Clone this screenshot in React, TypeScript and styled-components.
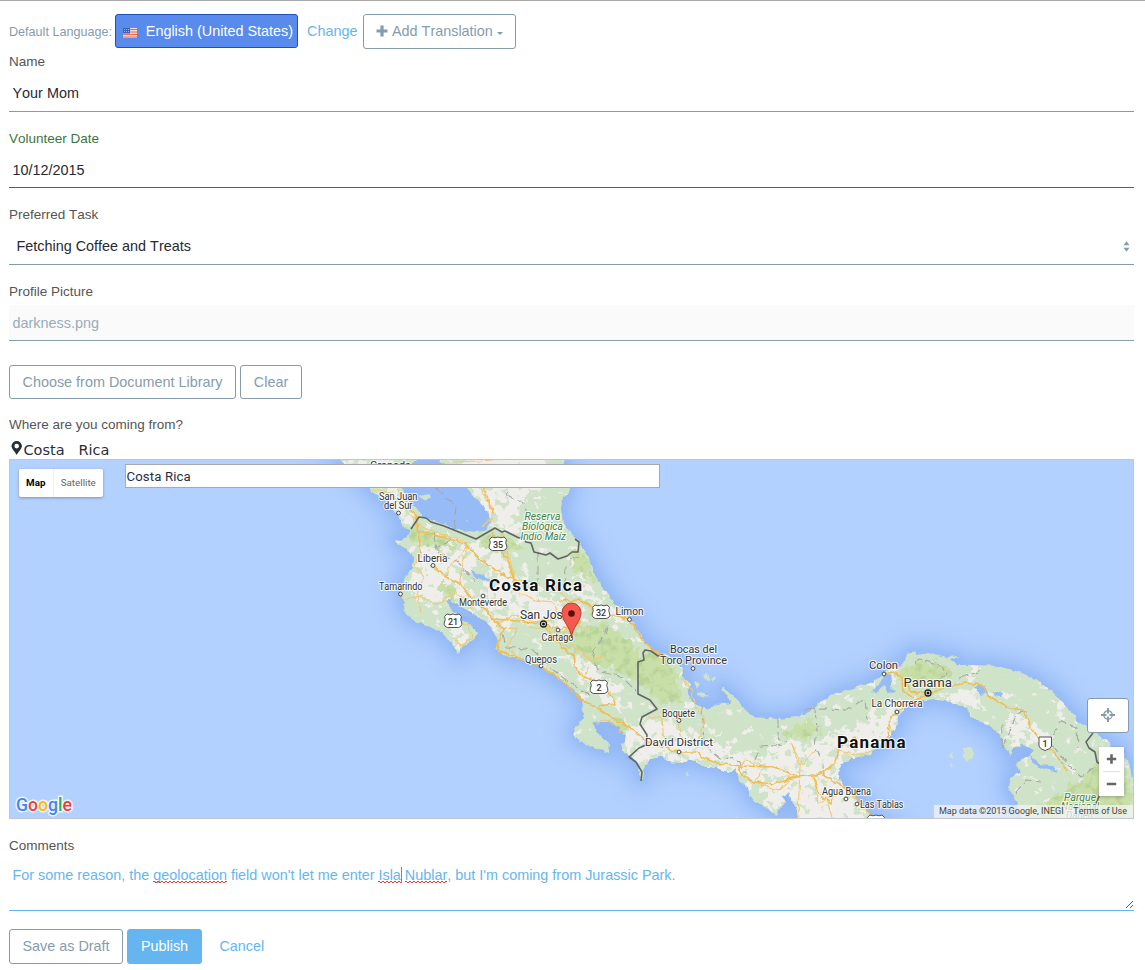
import React from 'react';
import styled, { createGlobalStyle, css } from 'styled-components';

const SANS = '"Liberation Sans", Arial, sans-serif';

const GlobalStyle = createGlobalStyle`
  body {
    margin: 0;
    background: #fff;
    font-family: ${SANS};
    font-kerning: none;
    overflow: hidden;
  }
  * { box-sizing: border-box; }
`;

const Page = styled.main`
  display: flex;
  flex-direction: column;
  height: 970px;
  padding: 13px 11px 0 9px;
  border-top: 1px solid #a9a9a9;
`;

const LanguageBar = styled.div`
  display: flex;
  align-items: flex-start;
  height: 36px;
  font-size: 14.4px;
  line-height: 34px;
`;

const LanguageCaption = styled.span`
  width: 106px;
  font-size: 12.6px;
  line-height: 36px;
  color: #869cad;
  white-space: nowrap;
`;

const LanguageBadge = styled.span`
  display: flex;
  align-items: center;
  width: 183px;
  height: 34px;
  padding-left: 7px;
  border: 1px solid #1d52b8;
  border-radius: 3px;
  background: #598bec;
  color: #fff;
  white-space: nowrap;
  svg { margin: 3px 8.8px 0 0; flex: none; }
`;

const LinkText = styled.a<{ $left: number }>`
  margin-left: ${p => p.$left}px;
  color: #65b6f0;
  white-space: nowrap;
`;

const Button = styled.button<{ $width: number; $height?: number; $primary?: boolean }>`
  display: flex;
  align-items: center;
  justify-content: center;
  flex: none;
  width: ${p => p.$width}px;
  height: ${p => p.$height ?? 34}px;
  padding: 0 0 ${p => (p.$height ? 1 : 0)}px;
  border: 1px solid #869cad;
  border-radius: 3px;
  background: #fff;
  color: #869cad;
  font: 14.4px ${SANS};
  font-kerning: none;
  white-space: nowrap;
  ${p => p.$primary && css`
    border-color: #65b6f0;
    background: #65b6f0;
    color: #fff;
  `}
`;

const TranslationButton = styled(Button)`
  margin-left: 6px;
  padding: 0 1px 1px 0;
  svg:first-child { margin: 0 4px 0 0; }
  svg:last-child { margin: 5px 0 0 4px; }
`;

const Field = styled.div<{ $height: number }>`
  height: ${p => p.$height}px;
  flex: none;
`;

const Label = styled.label<{ $valid?: boolean }>`
  display: block;
  height: 24px;
  font-size: 13.5px;
  line-height: 23px;
  color: ${p => (p.$valid ? '#3c763d' : '#555')};
`;

const Value = styled.div<{ $valid?: boolean; $disabled?: boolean; $select?: boolean }>`
  display: flex;
  align-items: flex-start;
  justify-content: space-between;
  height: ${p => (p.$valid ? 37 : 38)}px;
  padding: 11px 4.5px 0 ${p => (p.$select ? 7.5 : 3.5)}px;
  border-bottom: 1px solid ${p => (p.$valid ? '#3c763d' : '#869cad')};
  font-size: 14.4px;
  color: #272833;
  svg { margin-top: 3px; }
  ${p => p.$disabled && css`
    height: 36px;
    margin-top: 1px;
    padding-top: 10px;
    background: #fafafa;
    color: #98acba;
  `}
`;

const Actions = styled.div<{ $top: number }>`
  display: flex;
  gap: 4px;
  margin-top: ${p => p.$top}px;
  font-size: 14.4px;
  line-height: 34px;
`;

const Heading = styled(Label)`
  height: 23px;
`;

const Address = styled.div`
  display: flex;
  height: 23px;
  padding-left: 2px;
  font: 14.5px/28px "DejaVu Sans", sans-serif;
  color: #272f3a;
  white-space: pre;
  svg { margin: 5px 0.5px 0 0; }
`;

const MapFrame = styled.section`
  position: relative;
  flex: none;
  height: 360px;
  overflow: hidden;
  font-family: Roboto, sans-serif;
  > svg { display: block; }
`;

const MapTypes = styled.div`
  position: absolute;
  left: 10px;
  top: 10px;
  display: flex;
  height: 28px;
  background: #fff;
  border-radius: 2px;
  box-shadow: 0 1px 3px rgba(0, 0, 0, 0.3);
  font-size: 9.8px;
  line-height: 28px;
  text-align: center;
`;

const MapType = styled.span<{ $active?: boolean }>`
  width: ${p => (p.$active ? 33.5 : 50.5)}px;
  color: ${p => (p.$active ? '#000' : '#666')};
  font-weight: ${p => (p.$active ? 700 : 400)};
  border-left: ${p => (p.$active ? 0 : 1)}px solid #eee;
`;

const SearchBox = styled.div`
  position: absolute;
  left: 116px;
  top: 5px;
  width: 535px;
  height: 24px;
  padding-left: 0.5px;
  border: 1px solid #a9a9a9;
  background: #fff;
  color: #272f3a;
  font-size: 13.2px;
  line-height: 23px;
  letter-spacing: 0.12px;
`;

const LocateSlot = styled.div`
  position: absolute;
  right: 5px;
  bottom: 86px;
`;

const ZoomControl = styled.div`
  position: absolute;
  right: 10px;
  bottom: 23px;
  display: grid;
  place-items: center;
  width: 25px;
  height: 49px;
  background: #fff;
  box-shadow: 0 1px 3px rgba(0, 0, 0, 0.25);
`;

const Attribution = styled.div`
  position: absolute;
  right: 1px;
  bottom: 1px;
  display: flex;
  justify-content: space-between;
  width: 199px;
  height: 13px;
  padding: 0 6px 0 5px;
  background: rgba(245, 245, 245, 0.72);
  color: #444;
  font-size: 9px;
  line-height: 13px;
  white-space: nowrap;
`;

const Comments = styled.div`
  position: relative;
  height: 54px;
  padding: 10px 3.5px;
  border-bottom: 1px solid #65b6f0;
  font-size: 14.4px;
  line-height: 17px;
  color: #65b6f0;
  white-space: nowrap;
  > svg { position: absolute; right: 0; bottom: 1px; }
`;

const Misspelled = styled.span`
  position: relative;
  &::after {
    content: '';
    position: absolute;
    left: 0;
    right: 0;
    bottom: 0;
    height: 2px;
    background:
      linear-gradient(90deg, #e33 2px, transparent 2px) 0 0 / 4px 1px repeat-x,
      linear-gradient(90deg, #e33 2px, transparent 2px) 2px 1px / 4px 1px repeat-x;
  }
`;

const Caret = styled.span`
  display: inline-block;
  width: 1px;
  height: 16px;
  margin-right: -1px;
  vertical-align: -3px;
  background: #3d9be0;
`;

const LAND = `M330,450 L338,459 L348,466 L360,478 L370,488 L376,496 L385,499 L391,508 L397,513 L401,522 L403,528 L411,530
L408,536 L401,541 L395,540 L397,545 L407,549 L411,552 L414,560 L413,568 L404,577 L405,584 L400,589 L402,598 L405,612 L415,622
L430,627 L444,634 L451,643 L459,654 L462,647 L473,640 L478,633 L473,627 L466,622 L458,620 L457,614 L451,609 L448,602 L450,599
L461,607 L473,613 L480,619 L487,622 L492,630 L498,640 L496,648 L503,655 L515,658 L530,662 L541,667 L553,675 L563,682 L575,690
L581,698 L582,708 L585,717 L577,725 L573,735 L580,742 L597,748 L608,753 L609,743 L600,735 L594,728 L593,723 L600,722 L612,722
L620,729 L626,735 L625,742 L621,745 L623,752 L632,757 L637,763 L640,780 L643,780 L645,765 L650,759 L663,756 L670,762 L680,763
L692,760 L703,766 L717,768 L729,773 L736,768 L739,779 L747,787 L750,797 L757,802 L767,808 L777,817 L780,808 L786,802 L781,797
L788,793 L793,802 L797,811 L799,825 L888,825 L870,815 L860,803 L850,793 L842,784 L838,773 L841,764 L853,758 L870,755 L875,749
L888,740 L892,732 L898,725 L898,715 L905,708 L917,702 L933,699 L950,702 L967,708 L971,717 L983,723 L993,728 L1000,735
L1003,744 L1010,756 L1013,747 L1024,745 L1034,750 L1028,757 L1016,763 L1020,773 L1010,778 L1008,787 L1014,797 L1018,807
L1024,825 L1140,825 L1140,789 L1132,778 L1129,763 L1122,752 L1112,746 L1104,739 L1093,730 L1080,723 L1067,708 L1057,696
L1037,680 L1020,672 L997,666 L977,665 L957,665 L951,660 L960,656 L947,657 L930,653 L917,655 L915,651 L907,653 L905,661
L898,668 L889,669 L880,677 L870,683 L853,688 L837,693 L820,702 L810,711 L797,717 L777,719 L753,717 L743,707 L736,698
L729,693 L723,686 L722,690 L728,696 L732,703 L717,705 L709,709 L701,707 L693,702 L688,694 L690,683 L683,677 L683,668
L675,660 L668,655 L660,654 L650,647 L640,635 L630,618 L613,602 L597,578 L587,555 L580,542 L575,538 L568,530 L563,522
L561,508 L563,498 L569,493 L570,485 L566,470 L562,450Z`;

const LAKES = [
  'M397,482 L405,492 L409,503 L418,510 L424,518 L437,522 L455,529 L475,532 L486,531 L491,522 L487,510 L476,499 L467,488 L462,480 L435,458 L418,458Z',
  'M472,571 L480,574 L490,579 L489,582 L480,579 L473,576Z',
  'M886,672 L893,678 L890,686 L896,692 L889,694 L884,686 L876,693 L872,692 L880,683Z',
  'M974,687 L984,685 L988,693 L981,695Z M993,692 L1002,692 L1000,697 L995,696Z',
  'M450,596 L452,605 L461,607 L462,610 L474,615 L465,618 L456,611 L449,606Z',
  'M1030,755 L1040,764 L1052,765 L1058,772 L1044,769 L1034,765Z',
];

const ISLANDS = [
  'M418,496 L428,493 L431,497 L426,501Z',
  'M964,747 L973,747 L973,758 L966,762 L963,756Z',
  'M951,752 L954,751 L952,758 L949,757Z M950,763 L954,765 L951,767Z',
  'M702,675 L707,674 L709,680 L704,679Z M711,679 L717,676 L713,682Z M694,681 L699,684 L697,689Z M697,692 L710,696 L700,697Z',
  'M686,773 L689,774 L687,777Z M732,818 L738,816 L737,820Z',
  'M466,521 L469,520 L468,523Z',
];

const PALE = [
  'M378,494 L397,489 L409,511 L416,520 L405,525Z',
  'M462,455 L545,455 L553,485 L530,489 L520,507 L523,527 L508,533 L490,524 L487,507 L467,486Z',
  'M418,536 L440,543 L461,547 L470,565 L458,577 L478,596 L495,604 L520,618 L508,629 L490,617 L476,608 L451,596 L429,604 L410,592 L415,569 L420,558Z',
  'M445,532 L462,545 L480,560 L470,572 L450,560 L436,546Z',
  'M470,546 L484,539 L503,553 L514,575 L539,585 L545,602 L571,600 L586,610 L568,629 L546,626 L522,619 L494,602 L482,586 L486,567Z',
  'M566,588 L588,585 L611,610 L634,624 L614,622 L598,605Z',
  'M572,658 L591,665 L606,682 L619,686 L624,712 L606,702 L584,682Z',
  'M626,735 L647,718 L668,722 L710,744 L732,750 L748,770 L730,774 L700,764 L668,759 L644,760 L633,756 L622,747Z',
  'M720,753 L766,755 L773,742 L791,738 L810,747 L834,732 L858,738 L843,758 L832,776 L852,791 L870,825 L798,825 L791,793 L771,790 L750,778Z',
  'M840,732 L875,719 L902,697 L914,704 L895,718 L893,735 L864,755 L838,753Z',
  'M945,696 L965,686 L978,690 L979,708 L961,706Z',
  'M1003,720 L1022,711 L1032,724 L1048,734 L1050,748 L1028,739 L1010,744Z',
  'M1080,789 L1102,789 L1095,800 L1085,800Z',
  'M1100,739 L1121,750 L1131,769 L1110,760Z',
  'M452,624 L468,633 L463,646 L451,638Z',
  'M760,790 L780,789 L778,810 L768,804Z M783,791 L804,787 L817,817 L798,818Z',
  'M342,458 L392,458 L402,481 L373,485Z',
];

const HILLS = [
  'M414,525 L440,538 L464,546 L451,550 L420,546 L409,538Z',
  'M442,575 L450,590 L457,591 L452,602 L438,590Z',
  'M477,533 L500,535 L522,547 L507,554 L486,548Z',
  'M575,548 L587,559 L595,583 L583,575 L569,564Z',
  'M560,630 L604,624 L629,637 L635,653 L658,652 L674,669 L681,703 L663,702 L639,684 L620,672 L594,664 L567,649Z',
  'M781,735 L806,722 L825,728 L807,738Z',
  'M908,664 L940,661 L952,674 L937,689 L913,685 L900,675Z',
  'M1082,778 L1106,760 L1124,773 L1132,796 L1125,819 L1040,819 L1041,805 L1067,791Z',
  'M607,718 L622,718 L628,729 L616,730Z',
];

const MINOR_ROADS = [
  'M373,490 Q388,488 402,506 T430,530 L462,540',
  'M417,526 L421,551 L415,565 L424,579 L417,590 L421,612',
  'M433,567 L447,577 L449,567 L469,545 L463,562 L459,587',
  'M402,600 L419,596 L438,605 L455,592 L472,609',
  'M501,532 L508,554 L514,575 L515,590 L535,600 L553,602 L559,619',
  'M455,462 L480,461 L500,459 M480,490 L492,506 L492,517 L482,527',
  'M451,620 L469,625 L472,637 L462,646 L453,638',
  'M495,626 L513,615 L535,622 L570,618 L582,628',
  'M498,629 L518,628 L508,646 L515,656 M529,627 L549,628 L562,637 L571,619',
  'M555,588 L567,598 L565,615 M585,600 L592,612 L586,631',
  'M566,642 L579,651 L593,661 L604,655',
  'M589,666 L582,680 M648,717 L662,717 L664,744',
  'M679,721 L682,741 M682,677 L691,690 L697,710 L704,718 L697,747',
  'M791,743 L800,766 L798,817 M813,776 L818,804 L836,792',
  'M738,767 L746,760 L767,767 M792,744 L802,765 L815,750',
  'M762,769 L754,782 L779,790 L795,775',
  'M832,817 L827,801 M838,751 L862,755 L876,747',
  'M597,725 L603,719 L620,728 L620,733',
];

const MAJOR_ROADS = [
  'M397,490 L409,506 L418,520 L417,532 L451,539 L465,544 L480,560 L502,574 L512,579 L541,584',
  'M483,487 L494,515 M493,533 L501,550 L509,563 L514,581',
  'M418,532 L421,552 M433,565 L447,577 L461,584 L474,602 L487,611 L493,619 L508,620 L541,624 L562,629 L582,622',
  'M559,601 L580,600 L592,607 M608,614 L629,619 L640,637 L655,652 L671,660',
  'M492,619 L504,629 L497,646 L500,652 L517,657 L544,668 L563,681 L582,700 L603,712 L632,729 L648,742 L678,752 L697,752 L704,758 L716,763 L740,766 L774,767 L799,777 L820,774 L838,783 L855,797 L873,817',
  'M544,625 L554,638 L562,648 L574,655 L575,665 L582,676 L599,683 L614,698 L615,704 L597,706',
  'M820,774 L830,768 L837,758 L839,747 L856,737 M872,741 L888,738 L889,725 L890,718 L902,708 L915,700 L928,695 L943,688 L964,683 L982,685 L989,696 L1009,708 L1023,710 L1032,730 L1045,744 L1056,755 L1067,771',
  'M884,674 L895,673 L905,680 L911,692 L928,694 M902,680 L903,690 L914,698',
  'M739,767 L743,777 L754,782 L775,784 L800,776',
  'M813,777 L819,794 L831,804 L835,791',
];

const PROVINCES = [
  'M437,488 L447,498 L456,507 L454,529 M505,480 L508,496 L524,504 L529,520',
  'M433,532 L438,553 L458,562 L475,582 M451,540 L438,548',
  'M538,553 L538,585 M566,566 L565,586 M571,560 L580,556',
  'M503,634 L506,647 L533,650 L551,668 L566,680 L590,695',
  'M592,650 L596,669 L622,677 L636,691 M608,625 L602,640 L592,652',
  'M702,706 L704,745 L720,758 L736,759 L747,775',
  'M778,720 L778,738 L786,743 M815,710 L817,729 L815,747 L822,758 L824,775',
  'M755,760 L760,747 L785,745 M805,710 L824,709 L848,710 L865,699 L867,720',
  'M915,664 L918,659 L940,665 L948,674 L932,683 M960,678 L980,671',
  'M1003,724 L1002,749 L1016,714 L1030,710 M1052,735 L1061,721 L1077,728 L1078,748',
  'M1052,745 L1067,763 L1081,777 L1096,766 M1015,793 L1027,780 L1041,782',
];

type MapLabelData = [string, number, number, number, number, ('bold' | 'park')?];
const LABELS: MapLabelData[] = [
  ['Granada', 370, 469, 41, 11.2],
  ['San Juan', 379, 500, 38.5, 10],
  ['del Sur', 384, 509, 28.5, 10],
  ['Liberia', 417.5, 561.5, 30, 10.6],
  ['Tamarindo', 379, 590, 43.5, 10],
  ['Monteverde', 459, 606, 48, 10],
  ['Costa Rica', 489, 590.5, 93, 17, 'bold'],
  ['San José', 520, 619, 49, 12],
  ['Limon', 615.5, 615, 28, 10.8],
  ['Cartago', 541.5, 640.5, 32, 10],
  ['Quepos', 525, 662.5, 32, 10],
  ['Bocas del', 670, 653, 47, 11.5],
  ['Toro Province', 660, 664, 67, 11.5],
  ['Boquete', 662, 716.5, 33, 10],
  ['David District', 645, 746, 68, 11.5],
  ['Colon', 869, 668.5, 29, 11.5],
  ['Panama', 903.5, 687, 48.5, 13],
  ['La Chorrera', 871.5, 706.5, 51, 10.5],
  ['Panama', 837, 748, 68.5, 17, 'bold'],
  ['Agua Buena', 822, 795, 49, 10],
  ['Las Tablas', 860, 807.5, 43.5, 10],
  ['Reserva', 524.5, 520, 36, 10.5, 'park'],
  ['Biológica', 522, 530, 41, 10.5, 'park'],
  ['Indio Maíz', 520.5, 540, 45.5, 10.5, 'park'],
  ['Parque', 1064, 800.5, 32, 10.5, 'park'],
  ['Nacional', 1061, 810, 38, 10.5, 'park'],
  ['Darien', 1066, 819, 27, 10.5, 'park'],
];

const TOWNS = [
  [398.5, 513], [433, 565.5], [400.5, 594], [483, 596], [629.5, 619.5], [558, 630], [541, 666],
  [693, 668.5], [679, 720.5], [679, 752], [884, 674], [897, 712], [846, 799], [857, 804],
];
const CAPITALS = [[543.5, 624], [928, 693]];
const SHIELDS: [string, number, number][] = [['35', 498, 544], ['21', 453, 621], ['32', 601, 612], ['2', 599, 687], ['', 876, 822]];

const MapText = styled.text<{ $kind?: string }>`
  font-family: Roboto, sans-serif;
  font-weight: ${p => (p.$kind === 'bold' ? 700 : 400)};
  font-style: ${p => (p.$kind === 'park' ? 'italic' : 'normal')};
  fill: ${p => (p.$kind === 'park' ? '#3f8048' : p.$kind === 'bold' ? '#111' : '#333')};
  stroke: #fff;
  stroke-opacity: 0.8;
  stroke-width: 2.2px;
  stroke-linejoin: round;
  paint-order: stroke;
`;

const ShieldText = styled.text`
  font: 500 9px Roboto, sans-serif;
  fill: #333;
  text-anchor: middle;
`;

const LogoText = styled.text`
  font: 500 18.5px Roboto, sans-serif;
  stroke: rgba(255, 255, 255, 0.8);
  stroke-width: 3px;
  paint-order: stroke;
`;

function Terrain() {
  return (
    <svg width="1125" height="360" viewBox="9 459 1125 360">
      <defs>
        <filter id="coast" x="-10%" y="-10%" width="120%" height="120%"><feGaussianBlur stdDeviation="12" /></filter>
        <filter id="shore" x="-10%" y="-10%" width="120%" height="120%"><feGaussianBlur stdDeviation="5" /></filter>
        <filter id="rough" x="-5%" y="-5%" width="110%" height="110%">
          <feTurbulence type="fractalNoise" baseFrequency="0.12" numOctaves="3" seed="4" />
          <feDisplacementMap in="SourceGraphic" scale="20" xChannelSelector="R" yChannelSelector="G" />
        </filter>
        <filter id="coastline" x="-5%" y="-5%" width="110%" height="110%">
          <feTurbulence type="fractalNoise" baseFrequency="0.16" numOctaves="2" seed="8" />
          <feDisplacementMap in="SourceGraphic" scale="5" xChannelSelector="R" yChannelSelector="G" />
        </filter>
        <filter id="fleck" x="0" y="0" width="100%" height="100%">
          <feTurbulence type="fractalNoise" baseFrequency="0.1 0.12" numOctaves="3" seed="21" />
          <feColorMatrix values="0 0 0 0 0.62  0 0 0 0 0.77  0 0 0 0 0.57  14 0 0 0 -8.1" />
          <feComposite in2="SourceGraphic" operator="in" />
        </filter>
        <filter id="clearing" x="0" y="0" width="100%" height="100%" colorInterpolationFilters="sRGB">
          <feTurbulence type="fractalNoise" baseFrequency="0.09 0.11" numOctaves="3" seed="33" />
          <feColorMatrix values="0 0 0 0 0.94  0 0 0 0 0.93  0 0 0 0 0.92  14 0 0 0 -8.9" />
          <feComposite in2="SourceGraphic" operator="in" />
        </filter>
        <filter id="relief" x="0" y="0" width="100%" height="100%" colorInterpolationFilters="sRGB">
          <feTurbulence type="fractalNoise" baseFrequency="0.13" numOctaves="3" seed="12" result="n" />
          <feColorMatrix in="n" values="0 0 0 0 0.55  0 0 0 0 0.7  0 0 0 0 0.42  4 0 0 0 -1.9" />
          <feComposite in2="SourceGraphic" operator="in" />
        </filter>
        <clipPath id="landClip"><path d={LAND} /></clipPath>
      </defs>
      <rect x="9" y="459" width="1125" height="360" fill="#b3d1ff" />
      <path d={LAND} fill="#94b9f6" stroke="#94b9f6" strokeWidth="20" filter="url(#coast)" opacity="0.9" />
      <path d={LAND} fill="none" stroke="#86adf0" strokeWidth="6" filter="url(#shore)" opacity="0.5" />
      <g filter="url(#coastline)">
        <path d={LAND} fill="#cfe3c8" />
        <g clipPath="url(#landClip)">
          <path d={LAND} filter="url(#clearing)" />
          <g filter="url(#rough)" fill="#f0eeea">{PALE.map(d => <path key={d} d={d} />)}</g>
          <g filter="url(#fleck)">{PALE.map(d => <path key={d} d={d} />)}</g>
          <g filter="url(#rough)" fill="#c8dfa8">{HILLS.map(d => <path key={d} d={d} />)}</g>
          <g filter="url(#relief)" opacity="0.28">{HILLS.map(d => <path key={d} d={d} />)}</g>
        </g>
        <g fill="#96bbf7">{LAKES.map(d => <path key={d} d={d} />)}</g>
        <g fill="#cfe3c8">{ISLANDS.map(d => <path key={d} d={d} />)}</g>
      </g>
      <g filter="url(#coastline)" fill="none" strokeLinejoin="round">
        <g stroke="#a5a9a5" strokeWidth="1.1" strokeDasharray="9 4">{PROVINCES.map(d => <path key={d} d={d} />)}</g>
        <g stroke="#edca78" strokeWidth="1.1">{MINOR_ROADS.map(d => <path key={d} d={d} />)}</g>
        <g stroke="#efbd51" strokeWidth="1.6">{MAJOR_ROADS.map(d => <path key={d} d={d} />)}</g>
      </g>
      <g fill="none" stroke="#626662" strokeWidth="1.6" strokeLinejoin="round">
        <path d="M411,529 L419,517 L426,518 L431,522 L444,526 L476,539 L495,528 L502,532 L505,531 L519,538 L523,537 L526,542 L531,543 L534,552 L546,555 L550,553 L558,559 L567,556 L572,552 L578,552 L579,542 L575,539" />
        <path d="M669,659 L662,655 L658,656 L651,651 L645,650 L643,653 L644,660 L638,662 L638,694 L650,700 L657,709 L642,717 L640,724 L647,735 L646,745 L639,748 L629,757 L636,762 L642,772 L641,781" />
        <path d="M1093,733 L1086,742 L1089,748 L1095,752 L1097,762 L1106,768 M1100,794 L1095,806 L1090,817" />
      </g>
      <g fill="#fff" stroke="#444" strokeWidth="1">
        {TOWNS.map(([x, y]) => <circle key={`${x}-${y}`} cx={x} cy={y} r="1.9" />)}
      </g>
      {CAPITALS.map(([x, y]) => (
        <g key={x}><circle cx={x} cy={y} r="3" fill="#fff" stroke="#222" strokeWidth="1.3" /><circle cx={x} cy={y} r="1.5" fill="#111" /></g>
      ))}
      {SHIELDS.map(([n, x, y]) => (
        <g key={x}>
          <path d={`M${x - 6},${y - 7} q3,1.6 6,0 q3,1.6 6,0 l2.4,2.3 q-1.5,3.6 .4,6.7 q.4,3.6 -3.6,4.5 h-10.4 q-4,-.9 -3.6,-4.5 q1.9,-3.1 .4,-6.7z`} fill="#fff" stroke="#555" strokeWidth="1" />
          <ShieldText x={x} y={y + 3.5}>{n}</ShieldText>
        </g>
      ))}
      <path d="M1039,737 H1051.5 V746 Q1051,749 1045,750.5 Q1039.5,749 1039,746Z" fill="#fff" stroke="#555" />
      <ShieldText x={1045} y={747}>1</ShieldText>
      {LABELS.map(([t, x, y, w, size, kind]) => (
        <MapText key={`${t}${x}`} x={x} y={y} textLength={w} lengthAdjust={kind === 'bold' ? 'spacing' : 'spacingAndGlyphs'} fontSize={size} $kind={kind}>{t}</MapText>
      ))}
      <path d="M571.5,638 C571,627 562,622 562,612.5 A9.5,9.5 0 0 1 581,612.5 C581,622 572,627 571.5,638Z" fill="#f4584f" stroke="#b3312b" strokeWidth="0.9" />
      <circle cx="571.5" cy="613.5" r="3.3" fill="#5b0f0c" />
      <LogoText x="16" y="811" textLength="56" lengthAdjust="spacingAndGlyphs">
        <tspan fill="#4285f4">G</tspan><tspan fill="#ea4335">o</tspan><tspan fill="#fbbc05">o</tspan>
        <tspan fill="#4285f4">g</tspan><tspan fill="#34a853">l</tspan><tspan fill="#ea4335">e</tspan>
      </LogoText>
      <path d="M9.5,819 V459.5 H1133.5 V818.5 H9" fill="none" stroke="#c3c7cc" />
    </svg>
  );
}

const Flag = () => (
  <svg width="14" height="10" viewBox="0 0 14 10">
    <rect width="14" height="10" fill="#f6d9d5" />
    <path d="M0,1.5H14M0,4H14M0,6.5H14M0,9H14" stroke="#ea6a5a" strokeWidth="1.2" />
    <rect width="7" height="5.5" fill="#3765bd" />
    <path d="M1,1.5H7M1,3.5H7" stroke="#a9c1ec" strokeWidth=".8" strokeDasharray="1 1" />
  </svg>
);

export default function App() {
  return (
    <Page>
      <GlobalStyle />
      <LanguageBar>
        <LanguageCaption>Default Language:</LanguageCaption>
        <LanguageBadge><Flag />English (United States)</LanguageBadge>
        <LinkText $left={9}>Change</LinkText>
        <TranslationButton $width={153} $height={35}>
          <svg width="12" height="12" viewBox="0 0 12 12"><path d="M6,.5V11.5M.5,6H11.5" stroke="#869cad" strokeWidth="3.2" /></svg>
          Add Translation
          <svg width="6" height="3" viewBox="0 0 6 3"><path d="M0,0H6L3,3Z" fill="#869cad" /></svg>
        </TranslationButton>
      </LanguageBar>
      <Field $height={77}><Label>Name</Label><Value>Your Mom</Value></Field>
      <Field $height={76}><Label $valid>Volunteer Date</Label><Value $valid>10/12/2015</Value></Field>
      <Field $height={77}>
        <Label>Preferred Task</Label>
        <Value $select>
          Fetching Coffee and Treats
          <svg width="7" height="11" viewBox="0 0 7 11"><path d="M.5,4.3L3.5,.3L6.5,4.3ZM.5,6.7H6.5L3.5,10.7Z" fill="#869cad" /></svg>
        </Value>
      </Field>
      <Field $height={76}><Label>Profile Picture</Label><Value $disabled>darkness.png</Value></Field>
      <Actions $top={9}>
        <Button $width={227}>Choose from Document Library</Button>
        <Button $width={62}>Clear</Button>
      </Actions>
      <Actions $top={14}><Heading>Where are you coming from?</Heading></Actions>
      <Address>
        <svg width="12" height="14" viewBox="0 0 12 14"><path fillRule="evenodd" d="M5.7,0A5.2,5.2 0 0 1 10.9,5.1C10.9,8 7.2,11 5.7,14C4.2,11 .5,8 .5,5.1A5.2,5.2 0 0 1 5.7,0ZM5.7,2.8A2.3,2.3 0 1 0 5.7,7.4A2.3,2.3 0 1 0 5.7,2.8Z" fill="#272f3a" /></svg>
        {'Costa   Rica'}
      </Address>
      <MapFrame>
        <Terrain />
        <MapTypes><MapType $active>Map</MapType><MapType>Satellite</MapType></MapTypes>
        <SearchBox>Costa Rica</SearchBox>
        <LocateSlot>
          <Button $width={42} $height={35}>
            <svg width="15" height="15" viewBox="0.5 0.5 15 15" fill="none" stroke="#869cad">
              <circle cx="7.5" cy="7.5" r="4.2" strokeWidth="1.3" /><path d="M7.5,.5V6M7.5,9V14.5M.5,7.5H6M9,7.5H14.5" strokeWidth="2" />
            </svg>
          </Button>
        </LocateSlot>
        <ZoomControl>
          <svg width="25" height="49" viewBox="0 0 25 49" stroke="#666" strokeWidth="2.6">
            <path d="M12.5,7.3V16.7M7.8,12H17.2M7.8,37H17.2" /><path d="M4,24.5H21" stroke="#e3e3e3" strokeWidth="1" />
          </svg>
        </ZoomControl>
        <Attribution><span>Map data ©2015 Google, INEGI</span><span>Terms of Use</span></Attribution>
      </MapFrame>
      <Actions $top={15}><Heading>Comments</Heading></Actions>
      <Comments>
        For some reason, the <Misspelled>geolocation</Misspelled> field won't let me enter <Misspelled>Isla</Misspelled><Caret /> <Misspelled>Nublar</Misspelled>, but I'm coming from Jurassic Park.
        <svg width="9" height="9" viewBox="0 0 9 9"><path d="M1,8L8,1M5,8L8,5" stroke="#555" /></svg>
      </Comments>
      <Actions $top={18}>
        <Button $width={114} $height={35}>Save as Draft</Button>
        <Button $width={75} $height={35} $primary>Publish</Button>
        <LinkText $left={13.4}>Cancel</LinkText>
      </Actions>
    </Page>
  );
}
